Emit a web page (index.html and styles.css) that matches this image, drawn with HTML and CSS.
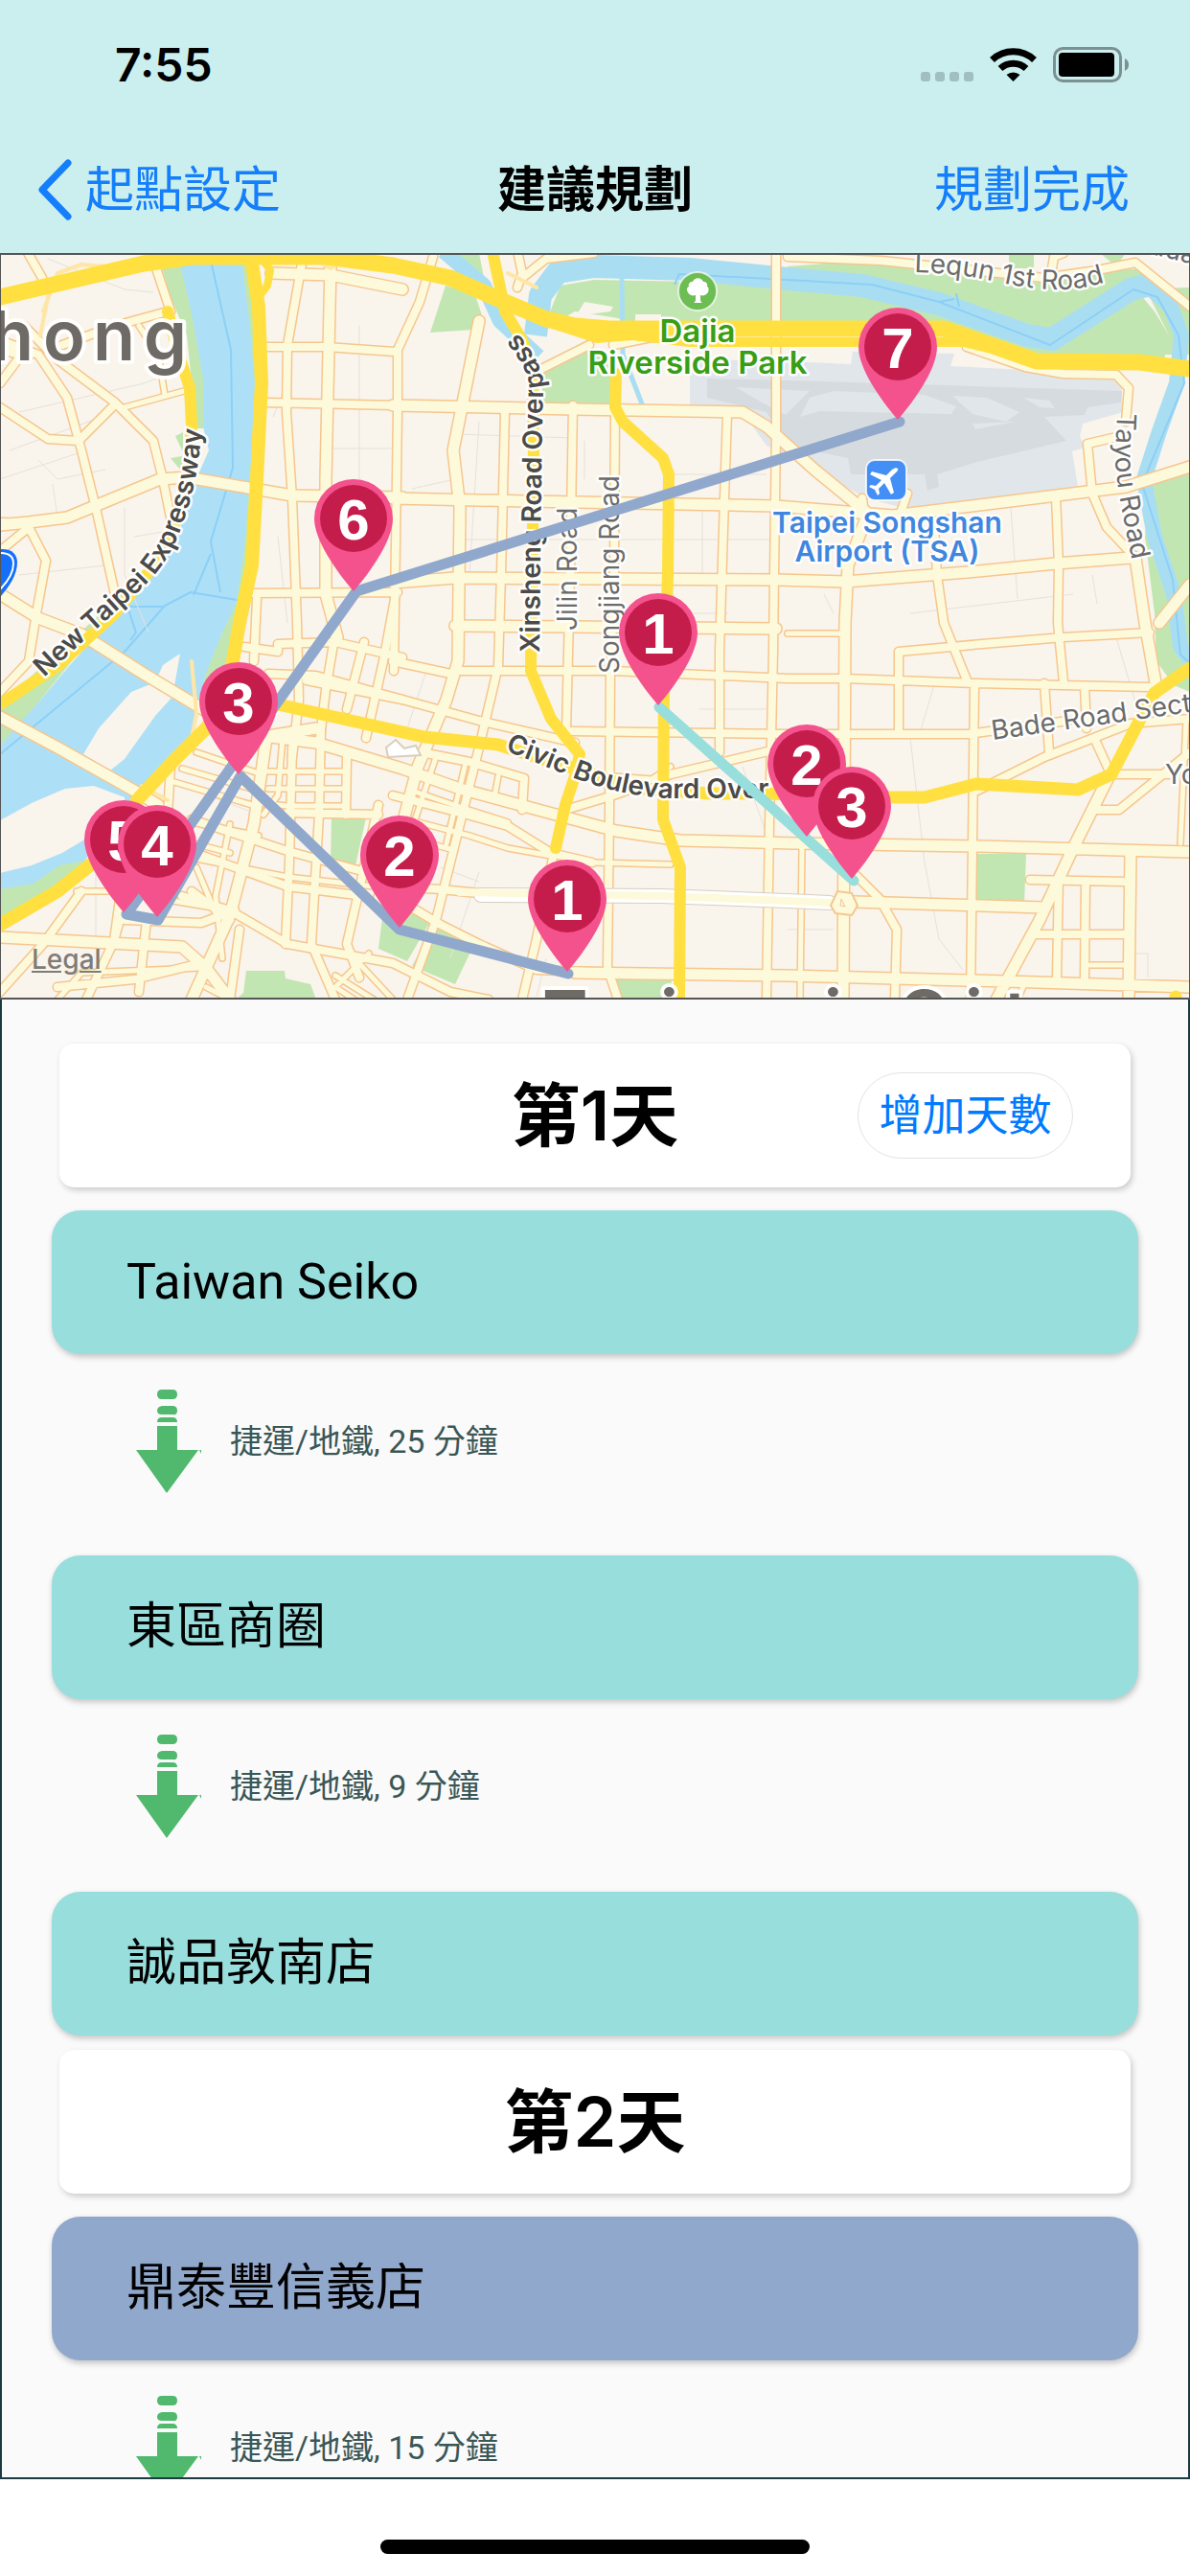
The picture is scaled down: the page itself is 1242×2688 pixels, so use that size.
FILE: index.html
```html
<!DOCTYPE html>
<html lang="zh-Hant">
<head>
<meta charset="utf-8">
<meta name="viewport" content="width=device-width, initial-scale=1">
<title>建議規劃</title>
<link rel="stylesheet" href="styles.css">
</head>
<body>
<div class="app">
  <header class="top">
    <div class="status">
      <time class="clock">7:55</time>
      <svg class="status-icons" width="220" height="40" viewBox="957 48 220 40" aria-hidden="true">
        <g fill="#a2bfbf"><rect x="960" y="75" width="10" height="10" rx="3"/><rect x="975" y="75" width="10" height="10" rx="3"/><rect x="990" y="75" width="10" height="10" rx="3"/><rect x="1005" y="75" width="10" height="10" rx="3"/></g>
        <g fill="none" stroke="#000" stroke-width="7"><path d="M1034.500 62.500a32 32 0 0 1 44 0"/><path d="M1043 71.500a20 20 0 0 1 27 0"/></g>
        <path d="M1049.500 78a11 11 0 0 1 14 0L1056.500 85z"/>
        <rect x="1099.500" y="50.500" width="69" height="34" rx="9" fill="none" stroke="#7b9090" stroke-width="3"/>
        <rect x="1104" y="55" width="58" height="25" rx="4"/>
        <path d="M1173 61q4 2 4 6.500t-4 6.500z" fill="#7b9090"/>
      </svg>
    </div>
    <nav class="nav">
      <button class="nav-btn" type="button">
        <svg width="36" height="64" viewBox="0 0 36 64" aria-hidden="true"><path d="M32 4 5 32l27 28" fill="none" stroke="currentColor" stroke-width="7" stroke-linecap="round" stroke-linejoin="round"/></svg>
        起點設定
      </button>
      <h1 class="title">建議規劃</h1>
      <button class="nav-btn nav-done" type="button">規劃完成</button>
    </nav>
  </header>

  <section class="map" aria-label="地圖">
    <svg class="map-art" viewBox="1 266 1240 775">
      <defs>
        <g id="w6">
          <path d="M280 805H362M280 823H362M272 838 300 841H362M618 900 700 902M837 885 835 1043M1238 750 1232 880M1137 1007H1178M822 661H880M205 785 270 807M190 802 266 824M182 816 270 842M640 810 680 813 700 800"/>
          <path d="M145 340 165 370 172 412M130 425 192 408M80 930H130M128 905 118 978M165 870 240 890M185 855 270 872M200 895 300 915 390 925M150 935 240 950M205 905 228 960"/>
          <path d="M425 855 490 872 530 885 575 893M430 825 480 842 530 858M410 870 470 886M455 790 425 880 400 950M485 800 466 880M520 810 516 832M1062 1043 1070 1025M295 770 290 830 275 850M240 860 225 935 232 1000"/>
          <path d="M350 1018 390 1043M385 995 350 1030 370 1043M370 1000 410 1043M215 1030 240 1043M60 1043 85 1015 210 1010"/>
        </g>
        <g id="w8">
          <path d="M0 355 40 370 70 415 85 470 100 530 120 620M25 340 60 375 120 420 160 460 170 500 178 540M0 425 50 458 82 460 120 422M0 400 24 368M30 550 48 585 38 640 30 690 0 722M0 575 28 552M65 360 120 340 175 325M163 280 178 325M28 262 44 290M0 365 30 372"/>
          <path d="M315 275 300 360 299 430 305 520 310 650 312 730 305 790M277 362H340L412 367M277 420 412 423M263 619 415 618M268 625 265 690M255 675 290 680 290 672 350 670 420 686M280 703 330 705 420 730M350 660 340 720 334 770M380 670 362 740M413 620 400 690 382 770"/>
          <path d="M452 268 438 315 415 365V430L411 700M527 430 523 600 520 695 500 780 470 900 455 960 425 1043M598 423 595 600 591 763M759 432 756 520 751 680V785M642 425 641 600 637 700 636 850 634 1010 645 1043M810 265V450L808 600 807 680 803 860 800 1043M540 262 545 285 540 300"/>
          <path d="M1102 518 1105 590 1104 650 1110 712M975 550 978 600 985 650 1010 712M938 765V680L1025 672 1110 665 1200 660M822 708H881L1018 713 1200 717M475 700H640L822 708M597 763 822 766H1010L1115 752M1020 825 1090 790 1180 755 1242 750M1090 713 1095 785M1132 716 1134 760M1142 770 1158 805M1145 845 1168 845 1242 785M1160 808H1220M1017 716 1013 1043"/>
          <path d="M1075 918 1175 920M1080 975H1178M1105 915 1103 1020M1133 920 1132 1020M892 912 918 938 936 970 934 1043M590 845 640 830 700 808 810 782M410 690 475 704M320 710 420 730 500 752 600 775M440 785 490 795 547 812 545 845M578 890 560 980 545 1043M410 830 480 848 530 862 575 890 618 900M380 905 410 925 460 928 500 932M410 935 460 965 500 985 560 1012 640 1015M300 985 410 1005 470 1035 510 1043"/>
          <path d="M300 848 395 850M335 760 333 850 325 985 350 1043M305 780 302 900 298 985M362 790 361 850M395 840 362 985 375 1020M200 855 300 888 400 915M190 885 300 925 380 935M190 935 240 950 300 985M150 870 120 978M85 930 45 985 0 1035M120 980 90 1043M153 960 145 1035M130 960 210 963 245 950M240 960 200 930M250 970 240 1043M60 1030 140 1022 210 1005M178 800 175 850M0 545 30 546"/>
          <path d="M1009 362 1070 383 1110 390 1165 391 1178 405 1175 440M1170 455 1135 463 1140 515 1155 550 1185 582M822 268 920 272 1090 290 1145 282 1185 274 1242 320M545 290 570 270 620 264M1098 280 1100 268 1110 264M615 360 565 385M640 360 690 350 760 355M900 520 903 545 940 535 947 515"/>
        </g>
        <g id="w12">
          <path d="M500 335 482 425 473 470 480 530 478 690 466 730 436 800 420 860 395 940M345 275 340 500V620L352 665M283 285 345 287 420 302M167 500 195 498 305 517 420 519M0 548 30 545 70 540 167 500M85 662 150 703 215 742M0 748 60 780 140 825 165 840M0 620 40 645 85 662"/>
          <path d="M410 423 600 427 775 430 800 445 850 490 905 535M410 520 550 523 810 528 932 538 1095 518 1175 508 1242 487M410 608 475 603 810 605 882 607 1010 597 1102 588 1180 582M475 653 810 656M905 538 885 590 882 650 880 1043M1185 582 1195 650 1207 718"/>
          <path d="M1160 805 1120 885 1085 960 1040 1043M275 768 330 775 420 802 480 823 543 840 643 867 710 877 830 880 1022 883 1242 889M892 941 1090 947M600 1015 822 1018 1050 1024 1242 1030M1180 890 1178 1043M0 978 190 988 215 1010 240 1043M278 770 265 860 240 955 200 1043M280 768 330 760M1242 610 1210 650"/>
        </g>
        <g id="hwy">
          <path stroke-width="17" d="M0 310 150 275 200 268H340L410 277 470 290 527 315 570 333 600 340 660 345M640 343H985L1082 377 1189 378 1242 385"/>
          <path stroke-width="10" d="M577 338 623 353 660 350 720 357H1005L1040 365"/>
          <path stroke-width="14" d="M262 268 270 320 273 400 268 500 263 590 250 650 243 690V720L215 760 180 795 143 835M110 890 60 930 0 965"/>
          <path stroke-width="12" d="M175 325 185 365 198 405 200 445 197 490 185 540 165 585 120 640 60 695 0 735M514 262 522 300 527 325 545 355 556 385 557 480 554 700 575 750 605 787 600 810 590 840 580 885"/>
          <path stroke-width="12" d="M643 390 642 425 650 440 692 478 698 495 697 600 693 720 692 855 710 905 709 1043"/>
          <path stroke-width="13" d="M290 735 380 755 443 769 520 777 560 790 610 805 660 822 740 828 800 828 929 832H965L1019 818 1125 824 1160 808 1185 760 1205 723 1242 697M1227 1043V1040"/>
          <path stroke-width="8" d="M275 272 282 282 279 298 270 310"/>
        </g>
        <g id="pin"><path d="M0-117a41 41 0 0 1 41 41C41-54 19-22 0 0C-19-22-41-54-41-76a41 41 0 0 1 41-41z" fill="#f4528d"/><circle cy="-76" r="35" fill="#c51d4b"/></g>
        <path id="p-taipei" d="M46 707 98 659 150 612Q178 585 191 545Q210 495 211 425"/>
        <path id="p-xin" d="M563 681 565 500 567 400Q567 376 524 328"/>
        <path id="p-lequn" d="M954 284Q1000 285 1040 294T1110 302 1170 288"/>
        <path id="p-tayou" d="M1166 431 1164 480Q1165 510 1185 600"/>
        <path id="p-civic" d="M527 783 600 812Q660 835 720 833H830"/>
      </defs>

      <rect class="land" y="264" width="1242" height="779"/>
      <g class="park">
        <path d="M168 276H190L202 327 214 395V447H205L195 350 178 310zM207 500 190 545 150 605 95 665 40 733 0 785V735L100 645 165 580zM248 270H258L270 340V500L262 620 240 705 207 745 213 700 232 660z"/>
        <path d="M0 926 35 920 62 901 95 896 60 930 0 965zM183 455 191 451V472zM178 478 195 475 188 490zM346 853H382L370 908 345 898zM257 1013H297L298 1021 324 1027 330 1043H246L254 1036z"/>
        <path d="M420 945 450 960 425 1003 395 990 400 950zM457 960 495 985 475 1027 430 1008zM640 1019H700L703 1043H646zM1018 891H1071L1069 943 1017 941zM465 298 495 305 505 335 494 344 449 347zM566 390 610 367 637 372V423H566zM470 264 505 290 500 264z"/>
        <path d="M566 345 585 298 620 292 822 296 960 310 1242 300V370H1082L985 340H663L645 332 600 325zM822 278 900 272 1080 295 1150 284 1190 280 1222 305 1215 380 822 320zM1053 264H1079V280H1053zM1148 264H1175L1165 278zM1200 500 1242 487V722L1225 715 1207 690 1205 640 1195 560z"/>
      </g>
      <path class="land" d="M602 328 610 315 640 320 637 325 615 328zM663 328H690V338H663zM1180 295 1200 310 1220 350 1205 325z"/>
      <path class="water" d="M188 276 200 327 212 395V445L218 470 207 495 195 530 182 570 150 610 108 655 72 695 40 733 0 778V928L35 922 62 903 88 898 140 840 160 815 190 792 202 765 208 735 214 705 232 660 247 628 255 570 262 480 266 400 260 335 252 270z"/>
      <path class="land" d="M188 682 170 694 162 712 137 722 103 760 87 787 115 804 130 792 162 747 180 727zM0 856 35 837 68 823 98 820 130 832V850L90 875 65 890 33 903 0 911z"/>
      <path class="river" stroke-width="24" d="M559 350 564 308 582 284 620 278 720 281 822 291 900 298 980 317 1072 350 1098 354 1180 302 1200 297"/>
      <path class="river" stroke-width="16" d="M1195 296 1222 320 1233 350 1228 400 1210 450 1194 500 1205 560 1225 620 1232 675 1242 688M463 262 505 298 522 335 562 372"/>
      <path class="river" stroke-width="5" d="M649 290 650 370 671 424"/>
      <path class="stream" d="M220 272 241 365 243 488 220 565 230 618M220 578 202 621M247 626 199 618 172 632 130 680 0 787M133 633H170M133 633 142 660 136 668M704 297 709 286 822 292 910 297 980 315 1096 360 1183 302 1208 310 1230 350 1236 400 1192 505 1224 605 1232 683 1242 692M980 315 996 312M998 306 1001 320"/>
      <path class="airfield" d="M720 375 822 377 888 380 890 367 996 369 992 382 1070 386 1110 392 1170 397 1172 430 1130 442 1127 455 1132 467 1119 471 1125 508 950 532 905 520 800 465 770 423H720z"/>
      <path class="runway" d="M738 395 860 398 1171 408 1170 420 1135 425 1132 433 1090 435 1113 460 1020 482 978 495 980 508 968 512 965 495H888L885 478 822 465 800 430 738 415z"/>
      <path class="airfield" d="M768 404 845 408 820 433 795 420zM845 415 870 408 965 412 998 424 993 432 855 429 835 435zM994 413 1030 415 1064 430 1050 440 1015 432zM1068 415 1095 418 1101 426 1085 425zM1015 442 1060 440 1018 448z"/>
      <path class="lanes" d="M50 270 130 302 160 305M20 430 150 400 190 385M10 470 120 430M0 500 90 470M40 480 60 500 110 490M60 540 55 505M130 530V600L155 660M140 560 170 555M20 600 110 590M375 340V560M345 468H410M285 435 300 400M290 560 300 650M425 760 445 700M475 453 600 457M430 510 475 500M475 563H690M700 495H800M690 563H810M733 530V600M685 640H760M490 600 500 440M610 460V500M730 740H810M775 800 800 870M950 640 1120 620M1055 530 1062 625M950 770 965 900 980 980 1005 1012M975 715 960 765M1165 665 1190 750M1140 600 1145 630M1185 995H1198V1020M870 970H822M100 900V980M190 820 270 850M500 910 470 1000M560 1040 570 1000M460 905 500 920M860 620 870 640"/>

      <g class="roads">
        <use href="#w6" class="edge" stroke-width="8"/><use href="#w8" class="edge" stroke-width="11"/><use href="#w12" class="edge" stroke-width="14"/>
        <use href="#w6" class="fill" stroke-width="5"/><use href="#w8" class="fill" stroke-width="8"/><use href="#w12" class="fill" stroke-width="11"/>
        <path d="M502 934 690 935 822 940 866 942" stroke="#d8cec0" stroke-width="16"/>
        <path d="M502 934 690 935 822 940 866 942" stroke="#fff" stroke-width="14"/>
        <path d="M480 931 690 935 822 940 870 942" stroke="#fdfadb" stroke-width="8"/>
        <path class="ramp" d="M45 325 60 285 85 276 110 278M52 300 42 350M325 268 345 280 360 270 385 276M200 690 205 745 198 780M148 820 175 835M560 300 530 285"/>
      </g>
      <g class="roads"><use href="#hwy" stroke="#ffe040"/></g>
      <path d="M867 945 874 930 889 932 895 945 889 955 872 953z" fill="#fdfadb" stroke="#f6c68e" stroke-width="2"/>
      <path d="M878 938 882 946 877 945z" fill="#f9f4ec" stroke="#f6c68e" stroke-width="1"/>
      <path d="M403 780 413 772 422 781 434 778 439 788 405 790z" fill="#fff" stroke="#d8cec0" stroke-width="2"/>

      <g>
        <circle cx="728" cy="304" r="20" fill="#6cbd52" stroke="#fff" stroke-opacity=".7" stroke-width="2"/>
        <path d="M726 313v-5c-3 1-7 0-8-3-2-3-1-5 1-6-1-3 1-5 4-5 2-5 9-5 11 0 3 0 5 2 4 5 2 1 2 4 1 6-2 3-5 4-8 3v5q0 2 2 3h-9q2-1 2-3z" fill="#fff"/>
        <rect x="904" y="480" width="42" height="42" rx="9" fill="#438ff5" stroke="#fff" stroke-opacity=".8" stroke-width="2"/>
        <path d="M937 489c-2-2-5 0-7 2l-5 5-15-4-2 3 12 6-6 6-5-1-2 2 6 3 3 6 2-2-1-5 6-6 7 12 3-2-4-15 5-5c2-2 4-4 3-5z" fill="#fff"/>
        <path d="M0 573c12-1 18 5 18 14 0 13-9 26-18 36z" fill="#146ffb"/>
        <path d="M0 577c9 0 14 4 14 11 0 10-6 19-14 27" fill="none" stroke="#fff" stroke-width="2"/>
      </g>

      <g class="label city">
        <text x="-9 45 97 150" y="376">hong</text>
        <text x="566 630 689 735 805 860 910 937 1007 1048 1090" y="1085">Taipei City</text>
      </g>
      <g class="label green"><text x="728" y="357">Dajia</text><text x="728" y="390">Riverside Park</text></g>
      <g class="label airport"><text x="926" y="556">Taipei Songshan</text><text x="926" y="586">Airport (TSA)</text></g>
      <g class="label major">
        <text><textPath href="#p-taipei">New Taipei Expressway</textPath></text>
        <text><textPath href="#p-xin">Xinsheng Road Overpass</textPath></text>
        <text><textPath href="#p-civic">Civic Boulevard Over</textPath></text>
      </g>
      <g class="label minor">
        <text><textPath href="#p-lequn">Lequn 1st Road</textPath></text>
        <text><textPath href="#p-tayou">Tayou Road</textPath></text>
        <text transform="translate(602 658) rotate(-90)">Jilin Road</text>
        <text transform="translate(646 703) rotate(-90)">Songjiang Road</text>
        <text transform="translate(1036 772) rotate(-8)">Bade Road Sect</text>
        <text transform="translate(1198 264) rotate(14)">dual</text>
        <text x="1216" y="818">Yo</text>
      </g>

      <path class="route" stroke="#91a8cd" d="M939 440 372 617 132 954 165 960 251 810 417 970 593 1016"/>
      <path class="route" stroke="#98dedc" d="M688 738 891 919"/>
      <g class="pins">
        <g transform="translate(369 617)"><use href="#pin"/><text y="-54">6</text></g>
        <g transform="translate(937 438)"><use href="#pin"/><text y="-54">7</text></g>
        <g transform="translate(687 736)"><use href="#pin"/><text y="-54">1</text></g>
        <g transform="translate(842 873)"><use href="#pin"/><text y="-54">2</text></g>
        <g transform="translate(889 917)"><use href="#pin"/><text y="-54">3</text></g>
        <g transform="translate(249 808)"><use href="#pin"/><text y="-54">3</text></g>
        <g transform="translate(129 952)"><use href="#pin"/><text y="-54">5</text></g>
        <g transform="translate(164 957)"><use href="#pin"/><text y="-54">4</text></g>
        <g transform="translate(417 968)"><use href="#pin"/><text y="-54">2</text></g>
        <g transform="translate(592 1014)"><use href="#pin"/><text y="-54">1</text></g>
      </g>
    </svg>
    <a class="legal" href="#legal">Legal</a>
  </section>

  <svg width="0" height="0" class="sprite" aria-hidden="true">
    <symbol id="arrow" viewBox="0 0 70 110"><path fill="#50b96e" d="M27 1h11q5 0 5 5t-5 5H27q-5 0-5-5t5-5zM27 18h11q5 0 5 5t-5 4H27q-5 0-5-4t5-5zM22 35q0-5 5-5h11q5 0 5 5zM22 39H43V64H65L32 109 0 64H22zM66 64h2v4z"/></symbol>
  </svg>

  <main class="plan">
    <section class="day">
      <div class="day-head">
        <h2>第1天</h2>
        <button class="add" type="button">增加天數</button>
      </div>
      <ol class="stops teal">
        <li><div class="stop">Taiwan Seiko</div><p class="leg"><svg class="arrow" width="70" height="110"><use href="#arrow"/></svg>捷運/地鐵, 25 分鐘</p></li>
        <li><div class="stop">東區商圈</div><p class="leg leg-final"><svg class="arrow" width="70" height="110"><use href="#arrow"/></svg>捷運/地鐵, 9 分鐘</p></li>
        <li><div class="stop">誠品敦南店</div></li>
      </ol>
    </section>
    <section class="day">
      <div class="day-head"><h2>第2天</h2></div>
      <ol class="stops blue">
        <li><div class="stop">鼎泰豐信義店</div><p class="leg"><svg class="arrow" width="70" height="110"><use href="#arrow"/></svg>捷運/地鐵, 15 分鐘</p></li>
      </ol>
    </section>
  </main>
  <footer class="home"><span class="home-bar"></span></footer>
</div>
</body>
</html>
```
FILE: styles.css
```css
* { box-sizing: border-box; }
body, h1, h2, p, ol { margin: 0; padding: 0; }
ol { list-style: none; }
body {
  font-family: Inter, "Noto Sans CJK TC", sans-serif;
  color: #000;
  background: #fff;
}
button {
  font: inherit;
  border: 0;
  padding: 0;
  background: none;
  cursor: pointer;
}
.app {
  display: flex;
  flex-direction: column;
  height: 100vh;
  overflow: hidden;
}

/* Status and navigation bars */
.top { flex: none; background: #caefee; }
.status {
  display: flex;
  justify-content: space-between;
  align-items: center;
  height: 132px;
  padding: 4px 64px 0 120px;
}
.clock { font-size: 48px; font-weight: 600; line-height: 60px; }
.nav {
  display: grid;
  grid-template-columns: 1fr auto 1fr;
  align-items: center;
  height: 132px;
  padding: 0 39px;
  font-size: 51px;
  line-height: 72px;
}
.nav-btn {
  display: flex;
  align-items: center;
  gap: 14px;
  justify-self: start;
  color: #147efb;
}
.nav-done { justify-self: end; margin-right: 24px; }
.title { font-size: 51px; font-weight: 600; }

/* Map */
.map {
  position: relative;
  flex: none;
  border: 2px solid #555;
  border-width: 2px 1px;
}
.map-art { display: block; width: 100%; height: auto; }
.land { fill: #f9f4ec; }
.park { fill: #c2e6b2; }
.water { fill: #ade0f6; }
.airfield { fill: #e1e6ea; }
.runway { fill: #d6dbdf; }
.river, .stream, .lanes, .roads, .route {
  fill: none;
  stroke-linejoin: round;
}
.river { stroke: #a9def2; }
.stream { stroke: #8ccff7; stroke-width: 2; }
.lanes { stroke: #e6e1da; stroke-width: 1; }
.roads { stroke-linecap: round; }
.edge { stroke: #f6c68e; }
.fill { stroke: #fdfadb; }
.ramp { stroke: #ffe6a6; stroke-width: 4; }
.route { stroke-width: 11; stroke-linecap: round; }
.label {
  paint-order: stroke;
  stroke: #fffffff0;
  stroke-width: 5;
  stroke-linejoin: round;
}
.city { font-size: 72px; font-weight: 600; fill: #6e6a65; stroke-width: 8; }
.green, .airport { font-weight: 600; text-anchor: middle; }
.green { font-size: 33px; fill: #379e15; }
.airport { font-size: 30px; fill: #3f86df; }
.major { font-size: 28px; font-weight: 600; fill: #4a4a4a; }
.minor { font-size: 28px; fill: #6b6b6b; }
.pins {
  font-family: "Liberation Sans", Arial, sans-serif;
  font-size: 60px;
  font-weight: 700;
  fill: #fff;
  text-anchor: middle;
}
.legal {
  position: absolute;
  left: 32px;
  bottom: 22px;
  font-size: 28px;
  font-weight: 500;
  line-height: 36px;
  color: #7f7b77;
}
.sprite { position: absolute; }

/* Itinerary */
.plan {
  flex: 1;
  min-height: 0;
  overflow: hidden;
  padding-top: 46px;
  border: 2px solid #1a3b40;
  border-top: 0;
  background: #fafafa;
}
.day { padding: 0 52px; }
.day + .day { padding-top: 15px; }
.day-head {
  display: grid;
  grid-template-columns: 1fr auto 1fr;
  align-items: center;
  height: 150px;
  margin: 0 8px 24px;
  padding-right: 60px;
  padding-left: 60px;
  border-radius: 15px;
  background: #fff;
  box-shadow: 2px 3px 6px #00000030;
}
.day-head h2 {
  grid-column: 2;
  font-size: 72px;
  font-weight: 600;
  line-height: 96px;
}
.add {
  justify-self: end;
  width: 225px;
  height: 90px;
  border: 1px solid #e3e3e6;
  border-radius: 45px;
  font-size: 45px;
  line-height: 64px;
  color: #007aff;
}
.stop {
  display: flex;
  align-items: center;
  height: 150px;
  padding: 0 78px;
  border-radius: 30px;
  font-family: Roboto, "Noto Sans CJK TC", sans-serif;
  font-size: 52px;
  line-height: 72px;
  box-shadow: 1px 3px 6px #00000038;
}
.teal .stop { background: #98dedc; }
.blue .stop { background: #91a8cd; }
.leg {
  display: flex;
  align-items: center;
  gap: 28px;
  height: 210px;
  padding: 0 88px 28px;
  font-family: Roboto, "Noto Sans CJK TC", sans-serif;
  font-size: 34px;
  line-height: 48px;
  color: #3a5757;
}
.leg-final { height: 201px; padding-bottom: 19px; }
.arrow { flex: none; }

.home {
  display: flex;
  flex: none;
  justify-content: center;
  height: 101px;
  padding-top: 63px;
}
.home-bar { width: 36%; height: 15px; border-radius: 8px; background: #000; }
```
